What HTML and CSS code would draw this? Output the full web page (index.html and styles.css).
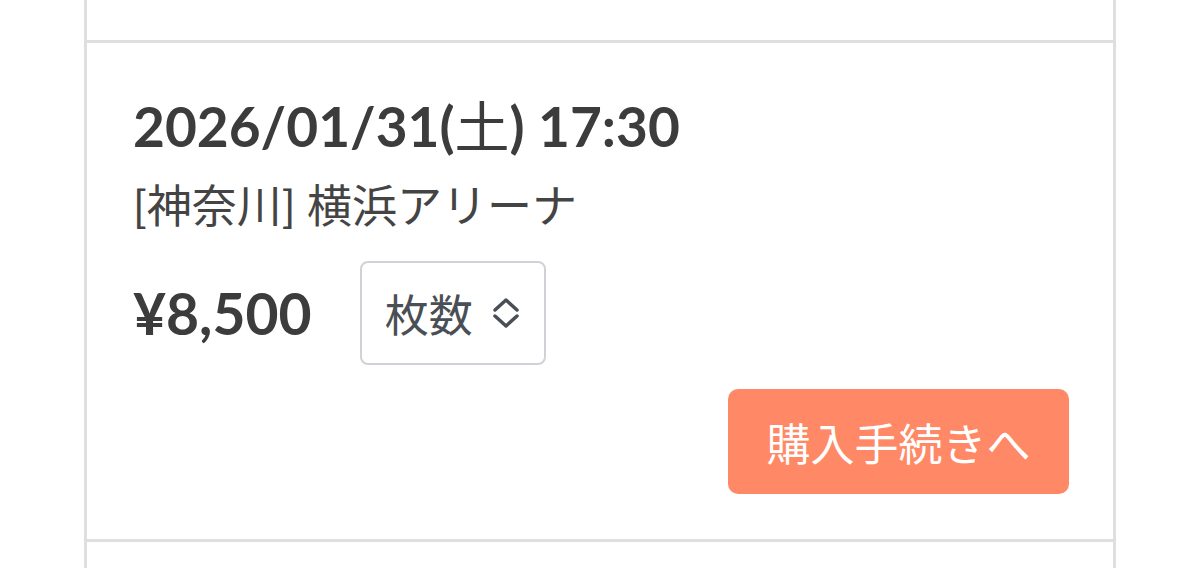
FILE: index.html
```html
<!DOCTYPE html>
<html lang="ja">
  <head>
    <meta charset="UTF-8" />
    <meta name="viewport" content="width=device-width, initial-scale=1.0" />
    <title>公演一覧</title>
    <link rel="stylesheet" href="styles.css">
  </head>
  <body>
    <div class="performance-list">
      <!-- previous performance (scrolled out of view) -->
      <div class="performance performance-prev"></div>

      <div class="performance">
        <div class="performance-date">2026/01/31(<span class="weekday">土</span>) 17:30</div>
        <div class="performance-venue">[神奈川] 横浜アリーナ</div>

        <div class="ticket-row">
          <div class="price">¥8,500</div>
          <div class="qty-select">
            <span>枚数</span>
            <svg class="qty-icon" viewBox="0 0 28 32" width="28" height="32">
              <path d="M3 13 L14 3 L25 13" />
              <path d="M3 19 L14 29 L25 19" />
            </svg>
          </div>
        </div>

        <div class="actions">
          <button class="buy-btn">購入手続きへ</button>
        </div>
      </div>

      <div class="performance performance-next"></div>
    </div>
  </body>
</html>
```

FILE: styles.css
```css
/* General styling */
body {
  margin: 0;
  background-color: #fff;
  font-family: Lato, "Noto Sans CJK JP", sans-serif;
  color: #3c3c3c;
}

.performance-list {
  margin-left: 84px;
  width: 1032px;
  box-sizing: border-box;
  border-left: 3px solid #dfdfdf;
  border-right: 3px solid #dfdfdf;
}

.performance {
  border-bottom: 3px solid #dfdfdf;
  padding: 53px 44px 45px 46px;
}

.performance-prev {
  height: 40px;
  padding: 0;
}

.performance-next {
  height: 40px;
  padding: 0;
  border-bottom: none;
}

.performance-date {
  font-size: 55px;
  font-weight: 700;
  line-height: 60px;
}

.performance-date .weekday {
  font-weight: 400;
}

.performance-venue {
  font-size: 45px;
  line-height: 56px;
  margin-top: 22px;
  color: #444;
}

/* price + quantity */
.ticket-row {
  display: flex;
  align-items: center;
  gap: 48px;
  margin-top: 27px;
}

.price {
  font-size: 57px;
  font-weight: 700;
}

.qty-select {
  display: flex;
  align-items: center;
  gap: 19px;
  height: 104px;
  box-sizing: border-box;
  padding: 0 24px 0 23px;
  border: 2px solid #cfd2d6;
  border-radius: 8px;
  font-size: 44px;
  color: #4a4f55;
}

.qty-icon path {
  fill: none;
  stroke: #4a4f55;
  stroke-width: 3.5;
  stroke-linecap: round;
  stroke-linejoin: round;
}

/* purchase button */
.actions {
  display: flex;
  justify-content: flex-end;
  margin-top: 24px;
}

.buy-btn {
  width: 341px;
  height: 105px;
  border: none;
  border-radius: 10px;
  background-color: #ff8966;
  color: #fff;
  font-family: inherit;
  font-size: 44px;
  cursor: pointer;
}
```
